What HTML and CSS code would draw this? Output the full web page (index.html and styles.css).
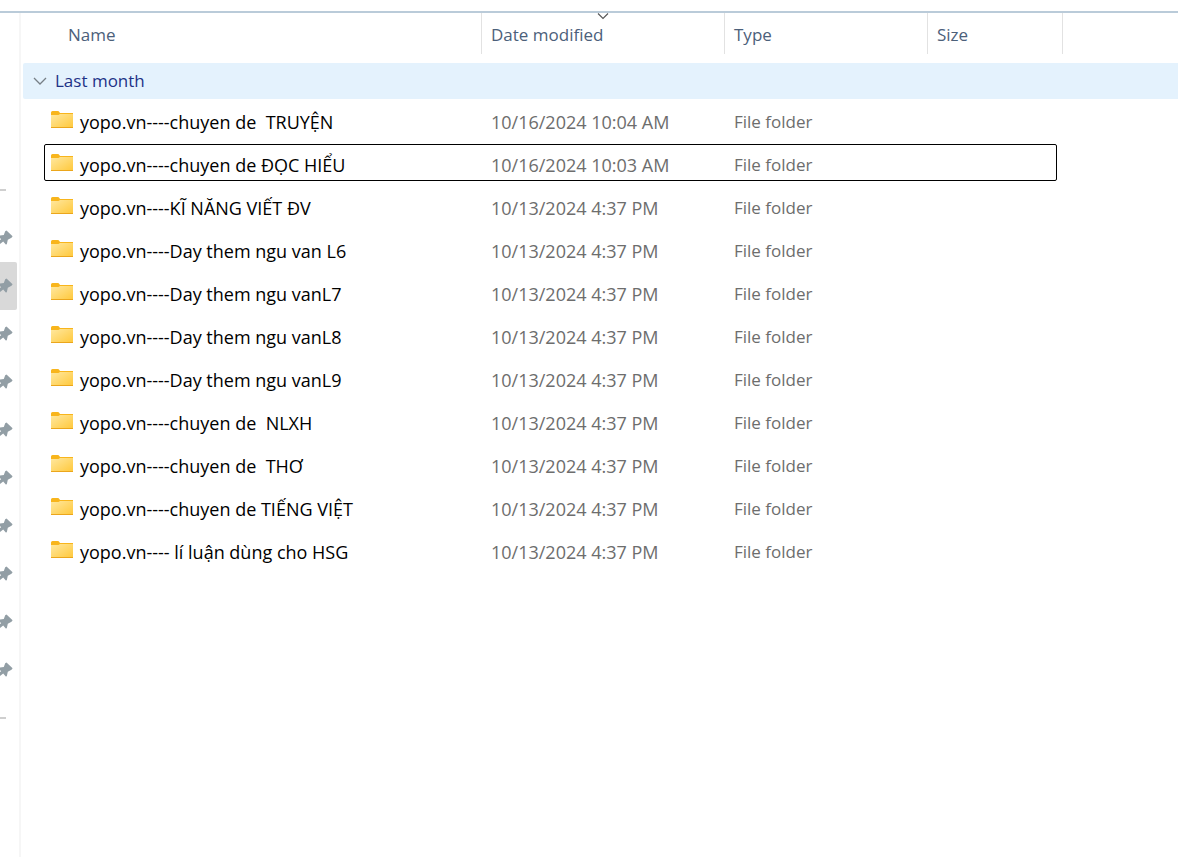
FILE: index.html
```
<!DOCTYPE html>
<html lang="vi">
<head>
<meta charset="utf-8">
<title>File list</title>
<link rel="stylesheet" href="styles.css">
<script src="list.js" defer></script>
</head>
<body>
<svg class="defs" aria-hidden="true">
  <defs>
    <linearGradient id="folder-face" x1="0" y1="0" x2="1" y2="1">
      <stop offset="0" stop-color="#ffe8a0"/>
      <stop offset="1" stop-color="#ffc83a"/>
    </linearGradient>
    <symbol id="folder" viewBox="0 0 22 18">
      <path d="M0 1.5Q0 0 1.500 0H6.500Q8 0 8.500 1.200L9 2H22V8H0Z" fill="#f8b51c"/>
      <path d="M0 4H7.500L9 3H22V17H0Z" fill="url(#folder-face)"/>
      <path d="M0 16H22V17H0Z" fill="#eba61c"/>
    </symbol>
    <symbol id="pin" viewBox="0 0 13 16">
      <path d="M6.500 0.500L12.600 6.300L11.500 7.800L7.800 9.800L6.800 14.200L5.800 14.500L3.200 11.500L0 14V10L1.200 9.200L0 8V5.600L3.800 5L5.200 1.200Z" fill="#929ea5"/>
    </symbol>
  </defs>
</svg>
<div class="topbar"></div>
<div class="explorer">
  <nav class="sidebar" aria-label="Quick access">
    <hr class="rule">
    <div class="pins" id="pins"></div>
    <hr class="rule">
  </nav>
  <main class="pane">
    <table class="files">
      <thead>
        <tr class="head">
          <th class="name">Name</th>
          <th>Date modified
            <svg class="sort" viewBox="0 0 12 7" aria-hidden="true"><path d="M1 0.500L6 5.500L11 0.500" fill="none" stroke="#555" stroke-width="1.100"/></svg>
          </th>
          <th>Type</th>
          <th>Size</th>
        </tr>
      </thead>
      <tbody class="rows" id="rows">
        <tr class="group">
          <th scope="rowgroup"><button class="toggle" type="button"><svg class="chevron" viewBox="0 0 14 8" aria-hidden="true"><path d="M1 1L7 7L13 1" fill="none" stroke="#777f86" stroke-width="1.300"/></svg>Last month</button></th>
        </tr>
      </tbody>
    </table>
  </main>
</div>
</body>
</html>
```
FILE: styles.css
```
* { box-sizing: border-box; }
body {
  margin: 0;
  min-height: 100vh;
  display: flex;
  flex-direction: column;
  background: #fff;
  color: #000;
  font: 17px/24px "Open Sans", "Noto Sans", sans-serif;
}
.defs { position: absolute; width: 0; height: 0; }
.topbar { height: 13px; border-bottom: 2px solid #bacbd9; }
.explorer { flex: 1; display: flex; }
.sidebar {
  flex: none;
  width: 21px;
  padding-top: 176px;
  border-right: 2px solid #f6f6f6;
}
.rule { width: 6px; height: 2px; margin: 0; border: 0; background: #cfcfcf; }
.pins { display: flex; flex-direction: column; padding: 23px 0; }
.pin {
  display: flex;
  align-items: center;
  width: 17px;
  height: 48px;
  padding: 0;
  border: 0;
  border-radius: 0 2px 2px 0;
  background: none;
}
.pin.current { background: #d9d9d9; }
.pin svg { width: 13px; height: 16px; }
.pane { flex: 1; min-width: 0; padding-left: 2px; }
.files, .files thead { display: block; }
.head, .row {
  display: grid;
  grid-template-columns: minmax(0, 438px) 243px 203px 135px;
  margin-left: 21px;
}
.head th {
  position: relative;
  padding: 10px 9px 7px;
  border-right: 1px solid #e2e2e2;
  color: #4c607a;
  font-weight: 400;
  text-align: left;
}
.head .name { padding-left: 24px; }
.sort { position: absolute; top: 0; left: 50%; width: 12px; height: 7px; margin-left: -6px; }
.rows { display: flex; flex-direction: column; gap: 6px; padding-top: 9px; }
.group { display: block; margin-bottom: -4px; }
.group th {
  display: block;
  padding: 0;
  border-radius: 2px 0 0 2px;
  background: #e4f2fd;
  font-weight: 400;
  text-align: left;
}
.toggle {
  display: flex;
  align-items: center;
  gap: 8px;
  width: 100%;
  height: 36px;
  padding: 0 10px;
  border: 0;
  background: none;
  color: #1e3287;
  font: inherit;
}
.chevron { width: 14px; height: 8px; }
.row {
  grid-template-columns: minmax(0, 436px) 243px 203px 129px;
  width: fit-content;
  height: 37px;
  border: 1px solid transparent;
  border-radius: 2px;
}
.row.focused { border-color: #000; }
.row td { padding: 8px 10px 3px; color: #6d6d6d; white-space: pre; }
.row .name { display: flex; gap: 7px; padding-left: 6px; color: #000; }
.row .name, .row .date { font-size: 18px; }
.folder { flex: none; width: 22px; height: 18px; margin-top: 1px; }
```
FILE: list.js
```
const files = [
  ["yopo.vn----chuyen de  TRUYỆN", "10/16/2024 10:04 AM"],
  ["yopo.vn----chuyen de ĐỌC HIỂU", "10/16/2024 10:03 AM"],
  ["yopo.vn----KĨ NĂNG VIẾT ĐV", "10/13/2024 4:37 PM"],
  ["yopo.vn----Day them ngu van L6", "10/13/2024 4:37 PM"],
  ["yopo.vn----Day them ngu vanL7", "10/13/2024 4:37 PM"],
  ["yopo.vn----Day them ngu vanL8", "10/13/2024 4:37 PM"],
  ["yopo.vn----Day them ngu vanL9", "10/13/2024 4:37 PM"],
  ["yopo.vn----chuyen de  NLXH", "10/13/2024 4:37 PM"],
  ["yopo.vn----chuyen de  THƠ", "10/13/2024 4:37 PM"],
  ["yopo.vn----chuyen de TIẾNG VIỆT", "10/13/2024 4:37 PM"],
  ["yopo.vn---- lí luận dùng cho HSG", "10/13/2024 4:37 PM"]
];
document.getElementById("rows").insertAdjacentHTML("beforeend", files.map(([name, date], i) =>
  `<tr class="row${i === 1 ? " focused" : ""}"><td class="name"><svg class="folder" aria-hidden="true"><use href="#folder"/></svg>${name}</td><td class="date">${date}</td><td>File folder</td><td></td></tr>`
).join(""));
document.getElementById("pins").innerHTML = Array.from({ length: 10 }, (_, i) =>
  `<button type="button" class="pin${i === 1 ? " current" : ""}" aria-label="Pinned folder ${i + 1}"><svg aria-hidden="true"><use href="#pin"/></svg></button>`
).join("");
```
